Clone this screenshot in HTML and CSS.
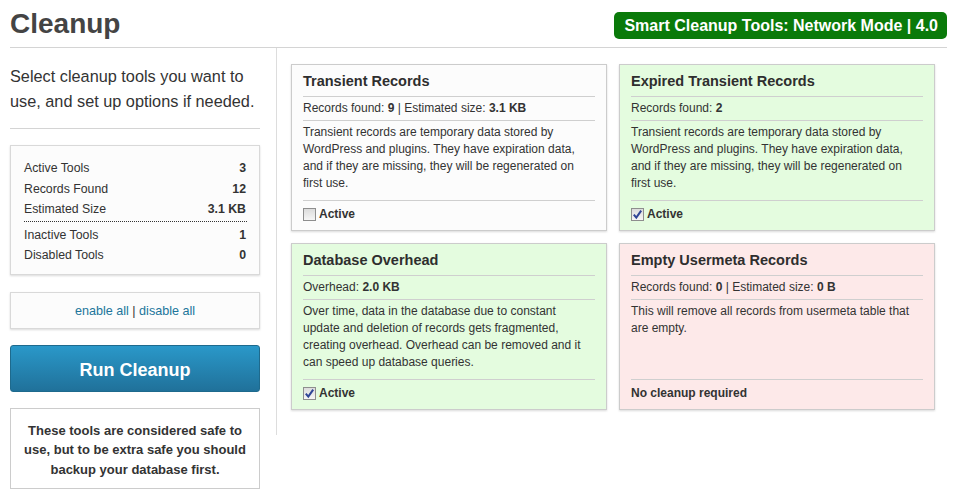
FILE: index.html
```html
<!DOCTYPE html>
<html>
<head>
<meta charset="utf-8">
<link rel="stylesheet" href="styles.css">
</head>
<body>
<div class="page">
  <header class="header">
    <h1 class="title">Cleanup</h1>
    <div class="badge">Smart Cleanup Tools: Network Mode | 4.0</div>
  </header>
  <div class="main">
    <aside class="sidebar">
      <p class="intro">Select cleanup tools you want to use, and set up options if needed.</p>
      <div class="rule"></div>
      <div class="box stats">
        <div class="stat"><span>Active Tools</span><b>3</b></div>
        <div class="stat"><span>Records Found</span><b>12</b></div>
        <div class="stat stat-sep"><span>Estimated Size</span><b>3.1 KB</b></div>
        <div class="stat stat-after"><span>Inactive Tools</span><b>1</b></div>
        <div class="stat"><span>Disabled Tools</span><b>0</b></div>
      </div>
      <div class="box links"><a href="#">enable all</a> | <a href="#">disable all</a></div>
      <button class="run">Run Cleanup</button>
      <div class="notice">These tools are considered safe to use, but to be extra safe you should backup your database first.</div>
    </aside>
    <section class="tools">
      <div class="card card-white">
        <div class="card-title">Transient Records</div>
        <div class="card-stats">Records found: <b>9</b> | Estimated size: <b>3.1 KB</b></div>
        <div class="card-desc">Transient records are temporary data stored by WordPress and plugins. They have expiration data, and if they are missing, they will be regenerated on first use.</div>
        <div class="card-foot"><span class="check"></span>Active</div>
      </div>
      <div class="card card-green">
        <div class="card-title">Expired Transient Records</div>
        <div class="card-stats">Records found: <b>2</b></div>
        <div class="card-desc">Transient records are temporary data stored by WordPress and plugins. They have expiration data, and if they are missing, they will be regenerated on first use.</div>
        <div class="card-foot"><span class="check checked"><svg viewBox="0 0 11 11" width="11" height="11"><path d="M1.8 5.6 L4.3 8.6 L9.2 1.6" fill="none" stroke="#2f4596" stroke-width="2"/></svg></span>Active</div>
      </div>
      <div class="card card-green">
        <div class="card-title">Database Overhead</div>
        <div class="card-stats">Overhead: <b>2.0 KB</b></div>
        <div class="card-desc">Over time, data in the database due to constant update and deletion of records gets fragmented, creating overhead. Overhead can be removed and it can speed up database queries.</div>
        <div class="card-foot"><span class="check checked"><svg viewBox="0 0 11 11" width="11" height="11"><path d="M1.8 5.6 L4.3 8.6 L9.2 1.6" fill="none" stroke="#2f4596" stroke-width="2"/></svg></span>Active</div>
      </div>
      <div class="card card-red">
        <div class="card-title">Empty Usermeta Records</div>
        <div class="card-stats">Records found: <b>0</b> | Estimated size: <b>0 B</b></div>
        <div class="card-desc">This will remove all records from usermeta table that are empty.</div>
        <div class="card-foot">No cleanup required</div>
      </div>
    </section>
  </div>
</div>
</body>
</html>
```
FILE: styles.css
```css
* { box-sizing: border-box; }
body {
  margin: 0;
  background: #fff;
  font-family: "Liberation Sans", Arial, sans-serif;
  color: #333;
}
.page {
  width: 947px;
  padding-left: 10px;
}
.header {
  display: flex;
  justify-content: space-between;
  align-items: center;
  height: 48px;
  border-bottom: 1px solid #d4d4d4;
}
.title {
  margin: 0;
  font-size: 28px;
  font-weight: bold;
  color: #444;
  line-height: 44px;
}
.badge {
  background: #0a7a0a;
  color: #fff;
  font-weight: bold;
  font-size: 16px;
  border-radius: 5px;
  padding: 0 9px 0 10px;
  height: 27px;
  line-height: 27px;
  margin-top: 3px;
}
.main {
  display: flex;
  align-items: flex-start;
}
.sidebar {
  width: 250px;
  margin-right: 16px;
  padding-top: 16px;
}
.intro {
  margin: 0;
  font-size: 16.3px;
  line-height: 25px;
  color: #333;
}
.rule {
  height: 1px;
  background: #d4d4d4;
  margin: 14px 0 16px;
}
.box {
  border: 1px solid #d9d9d9;
  background: #fcfcfc;
  box-shadow: 0 1px 2px rgba(0,0,0,0.15);
}
.stats {
  padding: 12px 12px 8px 13px;
  font-size: 12.3px;
}
.stat {
  display: flex;
  justify-content: space-between;
  line-height: 20.5px;
  padding-right: 1px;
}
.stat b { font-weight: bold; }
.stat-sep {
  padding-bottom: 1px;
  border-bottom: 1px dotted #333;
}
.stat-after { margin-top: 3px; }
.links {
  margin-top: 17px;
  height: 37px;
  line-height: 37px;
  text-align: center;
  font-size: 12.6px;
}
.links a {
  color: #21759b;
  text-decoration: none;
}
.run {
  display: block;
  width: 250px;
  height: 47px;
  margin-top: 16px;
  padding: 4px 0 0;
  border: 1px solid #1e6a8d;
  border-radius: 3px;
  background: linear-gradient(#2a98c9, #20719a);
  color: #fff;
  font-family: "Liberation Sans", Arial, sans-serif;
  font-size: 18px;
  font-weight: bold;
  cursor: pointer;
}
.notice {
  margin-top: 16px;
  border: 1px solid #ccc;
  padding: 12px 8px 9px;
  font-size: 13px;
  font-weight: bold;
  line-height: 19.5px;
  text-align: center;
  color: #333;
}
.tools {
  border-left: 1px solid #ddd;
  padding: 16px 0 25px 14px;
  display: grid;
  grid-template-columns: 316px 316px;
  gap: 12px;
}
.card {
  display: flex;
  flex-direction: column;
  border: 1px solid #ccc;
  box-shadow: 0 1px 2px rgba(0,0,0,0.15);
  padding: 0 11px;
  font-size: 12px;
  color: #333;
}
.card-white { background: #fcfcfc; }
.card-green { background: #e4fcdf; }
.card-red { background: #fde9e9; }
.card-title {
  font-size: 14.5px;
  font-weight: bold;
  line-height: 20px;
  padding: 6px 0 5px;
  border-bottom: 1px solid #cfcfcf;
  color: #2e2e2e;
}
.card-stats {
  line-height: 18px;
  padding: 2px 0 3px;
  border-bottom: 1px solid #cfcfcf;
}
.card-desc {
  flex: 1;
  line-height: 17px;
  padding: 3px 0 8px;
  border-bottom: 1px solid #cfcfcf;
}
.card-foot {
  display: flex;
  align-items: center;
  font-weight: bold;
  line-height: 20px;
  padding: 3px 0 6px;
}
.check {
  display: inline-flex;
  align-items: center;
  justify-content: center;
  width: 13px;
  height: 13px;
  border: 1px solid #8e8e8e;
  background: linear-gradient(#dcdcdc, #f6f6f6);
  margin-right: 3px;
}
```
